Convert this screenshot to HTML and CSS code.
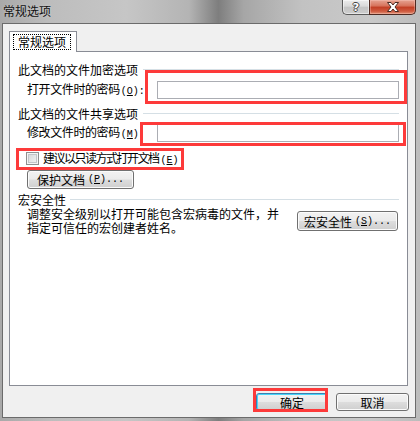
FILE: index.html
```html
<!DOCTYPE html>
<html lang="zh-CN">
<head>
<meta charset="utf-8">
<title>常规选项</title>
<link rel="stylesheet" href="styles.css">
</head>
<body>
<div class="window">
  <div class="titlebar">
    <span class="title">常规选项</span>
    <div class="caps">
      <div class="cap cap-help"><span class="qmark">?</span></div>
      <div class="cap cap-close">
        <svg width="46" height="15" viewBox="0 0 46 15"><polygon points="17.5,2.5 21,2.5 23,5 25,2.5 28.5,2.5 25,7 28.5,11.5 25,11.5 23,9 21,11.5 17.5,11.5 21,7" fill="#fff" stroke="#4a2a22" stroke-width="1" stroke-linejoin="round"/></svg>
      </div>
    </div>
  </div>
  <div class="client">
    <div class="tabs">
      <div class="tab"><span class="tab-label">常规选项</span></div>
    </div>
    <div class="panel">
      <div class="ghead g1"><span>此文档的文件加密选项</span><i class="sep"></i></div>
      <div class="frow r1"><span class="lbl"><span class="tight">打开文件时的密码</span><span class="acc">(<u>O</u>):</span></span><span class="pw"></span></div>
      <div class="ghead g2"><span>此文档的文件共享选项</span><i class="sep"></i></div>
      <div class="frow r2"><span class="lbl"><span class="tight">修改文件时的密码</span><span class="acc">(<u>M</u>):</span></span><span class="pw"></span></div>
      <div class="crow"><span class="cbox"></span><span class="ctext"><span class="tight">建议以只读方式打开文档</span><span class="acc">(<u>E</u>)</span></span></div>
      <div class="btn btn-protect">保护文档<span class="acc">(<u>P</u>)...</span></div>
      <div class="ghead g3"><span>宏安全性</span><i class="sep"></i></div>
      <div class="drow">
        <p class="desc">调整安全级别以打开可能包含宏病毒的文件，并<br>指定可信任的宏创建者姓名。</p>
        <div class="btn btn-macro">宏安全性<span class="acc">(<u>S</u>)...</span></div>
      </div>
    </div>
    <div class="footer">
      <div class="btn btn-ok">确定</div>
      <div class="btn btn-cancel">取消</div>
    </div>
  </div>
  <div class="mark m1"></div>
  <div class="mark m2"></div>
  <div class="mark m3"></div>
  <div class="mark m4"></div>
</div>
</body>
</html>
```

FILE: styles.css
```css
* { box-sizing: border-box; margin: 0; padding: 0; }
html, body { width: 420px; height: 421px; overflow: hidden; }
body {
  font: 12px/13px "Noto Sans CJK SC", "Noto Sans CJK JP", sans-serif;
  color: #000;
  background:
    linear-gradient(to right, #a9a9a9 0%, #bdbdbd 12%, #c6c6c6 30%, #b4b4b4 45%, #7e7e7e 52%, #a6a6a6 58%, #c2c2c2 72%, #c9c9c9 88%, #bcbcbc 100%);
}
.window { position: relative; width: 420px; height: 421px; display: flex; flex-direction: column; }

.titlebar { height: 23px; display: flex; align-items: flex-start; }
.title { padding: 4px 0 0 3px; line-height: 14px; color: #111; text-shadow: 0 0 3px rgba(255,255,255,.35); }
.caps { margin-left: auto; margin-right: 4px; display: flex; }
.cap { height: 15px; }
.cap-help {
  width: 27px;
  border: 1px solid #5b5b5b; border-top: 0; border-right: 0;
  border-radius: 0 0 0 5px;
  background: linear-gradient(#ececec 0%, #d9d9d9 45%, #c4c4c4 50%, #cdcdcd 100%);
  box-shadow: inset 0 0 0 1px rgba(255,255,255,.5);
  display: flex; justify-content: center; align-items: center;
}
.qmark {
  font: bold 11px/11px "DejaVu Sans", sans-serif; color: #fff;
  text-shadow: 1px 0 #444, -1px 0 #444, 0 1px #444, 0 -1px #444;
}
.cap-close {
  width: 47px;
  border: 1px solid #4f2a22; border-top: 0;
  border-radius: 0 0 5px 0;
  background: linear-gradient(#e6a392 0%, #d7735c 42%, #c23f25 52%, #cf5a3f 80%, #e19478 100%);
  box-shadow: inset 0 0 0 1px rgba(255,210,200,.35);
}
.cap-close svg { display: block; }

.client {
  margin: 0 4px 0 2px; height: 395px;
  border: 1px solid #6b6b6b;
  background: #f0f0f0;
  display: flex; flex-direction: column;
}
.tabs { padding: 7px 0 0 6px; display: flex; position: relative; z-index: 1; }
.tab {
  width: 68px; height: 21px; margin-bottom: -1px;
  border: 1px solid #898c95; border-bottom: 0;
  background: #fff; padding: 2px 0 0 3px;
}
.tab-label { display: block; width: 58px; height: 16px; border: 1px dotted #000; text-align: center; line-height: 14px; }

.panel {
  margin: 0 7px 0 6px; height: 335px;
  border: 1px solid #898c95; background: #fff;
  display: flex; flex-direction: column;
}
.ghead { display: flex; align-items: center; height: 13px; padding-left: 8px; margin-right: 8px; }
.ghead .sep { flex: 1; height: 1px; background: #d5dfe5; margin-left: 5px; }
.g1 { margin-top: 11px; }
.g2 { margin-top: 8px; }
.g3 { margin-top: 4px; }
.g3 .sep { margin-left: 4px; }

.acc { font: 10px/13px "Liberation Mono", monospace; padding-left: 3px; }
.acc u { text-decoration: underline; }

.frow { display: flex; height: 18px; padding-left: 17px; margin-right: 8px; }
.r1 { margin-top: 5px; }
.r2 { margin-top: 4px; }
.lbl { padding-top: 1px; white-space: nowrap; }
.lbl .tight { letter-spacing: -0.4px; }
.lbl .acc { padding-left: 1px; }
.pw { margin-left: auto; width: 242px; height: 18px; border: 1px solid #abadb3; background: #fff; }

.crow { display: flex; align-items: center; gap: 4px; height: 15px; margin-top: 9px; padding-left: 16px; }
.cbox {
  width: 13px; height: 13px; border: 1px solid #8e8f8f;
  background: linear-gradient(135deg, #d2d4d6, #f6f6f6);
  box-shadow: inset 0 0 0 1px #f4f4f4, inset 0 0 0 2px #c3c6ca;
}
.ctext { white-space: nowrap; }
.ctext .tight { letter-spacing: -1.5px; }
.ctext .acc { padding-left: 2px; }

.btn {
  display: flex; align-items: center; justify-content: center;
  border: 1px solid #707070; border-radius: 3px;
  background: linear-gradient(#f2f2f2 0%, #ebebeb 48%, #dddddd 52%, #cfcfcf 100%);
  box-shadow: inset 0 0 0 1px #fbfbfb;
  white-space: nowrap;
}
.btn-protect { width: 107px; height: 19px; margin: 4px 0 0 17px; }
.drow { display: flex; align-items: flex-start; padding-left: 17px; margin-top: 1px; }
.desc { width: 252px; line-height: 14px; }
.btn-macro { width: 101px; height: 20px; margin: 4px 9px 0 auto; }

.footer { display: flex; justify-content: flex-end; gap: 8px; padding: 7px 6px 0 0; }
.btn-ok, .btn-cancel { height: 18px; }
.btn-ok { width: 72px; border-color: #3c7fb1; box-shadow: inset 0 0 0 1px #48d4f8; }
.btn-cancel { width: 73px; }

.mark { position: absolute; border: 3px solid #fd3a3a; }
.m1 { left: 145px; top: 70px; width: 262px; height: 34px; }
.m2 { left: 140px; top: 122px; width: 266px; height: 24px; }
.m3 { left: 16px; top: 148px; width: 168px; height: 22px; }
.m4 { left: 253px; top: 388px; width: 75px; height: 24px; }
```
